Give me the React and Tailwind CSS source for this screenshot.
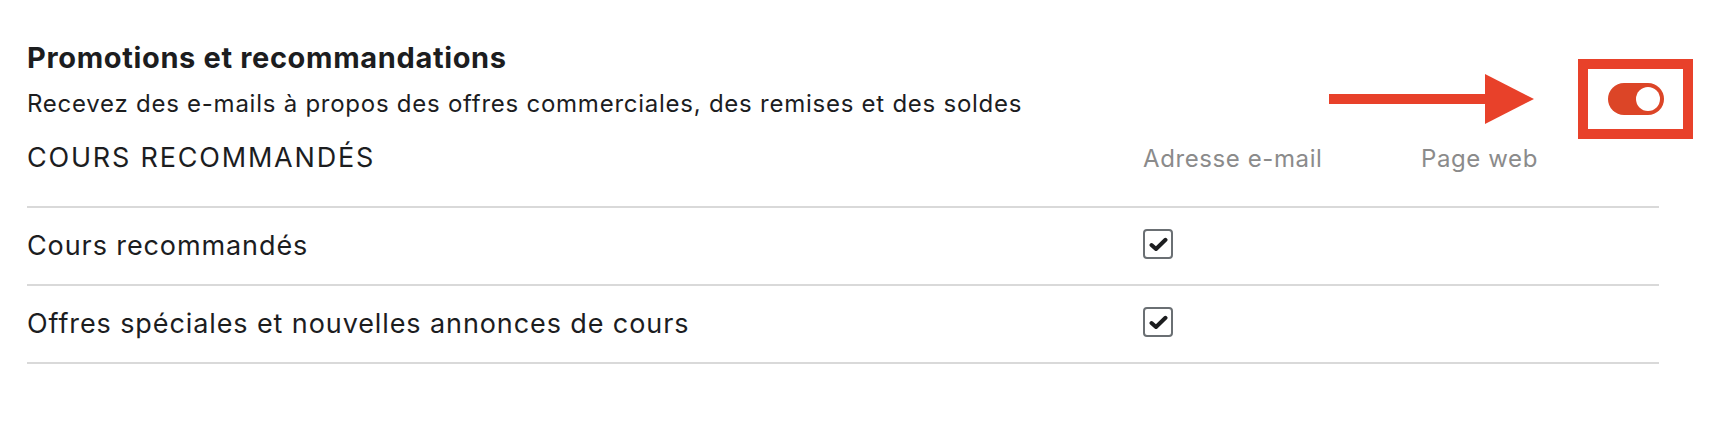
import React from 'react';

const rows = [
  { label: 'Cours recommandés', email: true },
  { label: 'Offres spéciales et nouvelles annonces de cours', email: true },
];

function CheckBox() {
  return (
    <div className="w-[30px] h-[30px] -mt-[4px] rounded-[4px] border-2 border-[#6a6f73] flex items-center justify-center">
      <svg width="19" height="15" viewBox="0 0 19 15">
        <path d="M2.5 8 L7 12 L16.5 2.8" fill="none" stroke="#1c1d1f" strokeWidth="4" strokeLinecap="round" strokeLinejoin="round" />
      </svg>
    </div>
  );
}

function Arrow() {
  return (
    <svg width="206" height="50" viewBox="0 0 206 50">
      <rect x="0" y="20" width="160" height="10" fill="#e8412a" />
      <polygon points="156,0 205,25 156,50" fill="#e8412a" />
    </svg>
  );
}

export default function App() {
  return (
    <div className="min-h-screen bg-white pl-[27px] pr-[25px] pt-[41px] text-[#1c1d1f] font-['Inter','Noto_Sans',sans-serif]">
      {/* Header with toggle */}
      <div className="flex justify-between items-start">
        <div>
          <h2 className="text-[29px] leading-[34px] font-bold tracking-[0.65px]">Promotions et recommandations</h2>
          <p className="mt-[15px] text-[24px] leading-[28px] tracking-[0.75px]">Recevez des e-mails à propos des offres commerciales, des remises et des soldes</p>
        </div>
        <div className="flex items-center mt-[18px]">
          <Arrow />
          <div className="ml-[43px] w-[115px] h-[80px] border-[10px] border-[#e8412a] flex items-center justify-center">
            <div className="w-[56px] h-[32px] rounded-full bg-[#dc4527] flex items-center justify-end pr-[4px]">
              <div className="w-[24px] h-[24px] rounded-full bg-white" />
            </div>
          </div>
        </div>
      </div>

      {/* Table */}
      <div className="mr-[34px] mt-[3px]">
        <div className="grid grid-cols-[1116px_278px_1fr] items-baseline h-[66px] border-b-2 border-[#d9d9d9]">
          <span className="text-[27px] leading-[32px] tracking-[1.8px]">COURS RECOMMANDÉS</span>
          <span className="text-[24px] leading-[32px] tracking-[0.6px] text-[#8b8b8b]">Adresse e-mail</span>
          <span className="text-[24px] leading-[32px] tracking-[0.6px] text-[#8b8b8b]">Page web</span>
        </div>
        {rows.map(r => (
          <div key={r.label} className="grid grid-cols-[1116px_278px_1fr] items-center h-[78px] border-b-2 border-[#d9d9d9]">
            <span className="text-[27px] leading-[32px] tracking-[0.9px]">{r.label}</span>
            <div>{r.email && <CheckBox />}</div>
            <div />
          </div>
        ))}
      </div>
    </div>
  );
}
